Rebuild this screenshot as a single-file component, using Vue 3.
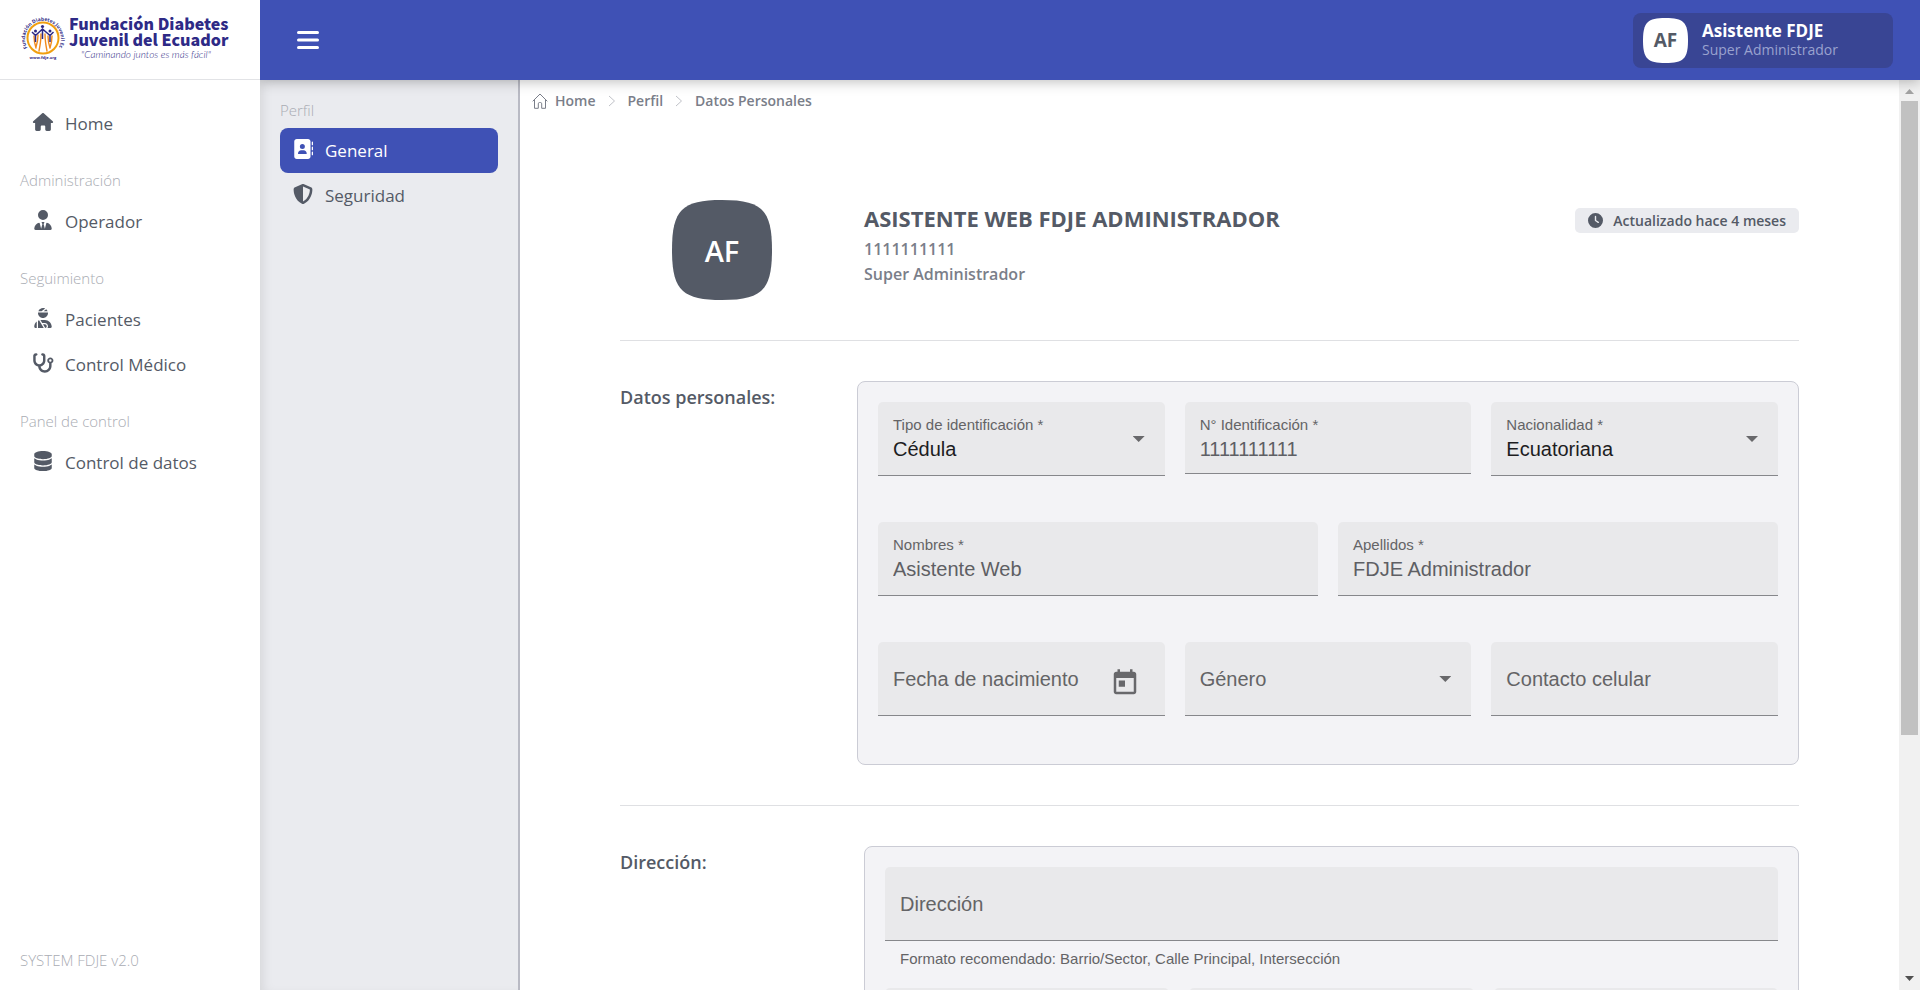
<script setup>
import { ref } from 'vue'

const icons = {
  house: { box: '0 0 576 512', d: 'M575.8 255.5c0 18-15 32.1-32 32.1h-32l.7 160.2c0 2.7-.2 5.4-.5 8.1V472c0 22.1-17.9 40-40 40H456c-1.1 0-2.2 0-3.3-.1c-1.4 .1-2.8 .1-4.2 .1H416 392c-22.1 0-40-17.9-40-40V448 384c0-17.7-14.3-32-32-32H256c-17.7 0-32 14.3-32 32v64 24c0 22.1-17.9 40-40 40H160 128.1c-1.5 0-3-.1-4.5-.2c-1.2 .1-2.4 .2-3.6 .2H104c-22.1 0-40-17.9-40-40V360c0-.9 0-1.9 .1-2.8V287.6H32c-18 0-32-14-32-32.1c0-9 3-17 10-24L266.4 8c7-7 15-8 22-8s15 2 21 7L564.8 231.5c8 7 12 15 11 24z' },
  operator: { box: '0 0 448 512', d: 'M96 128a128 128 0 1 0 256 0A128 128 0 1 0 96 128zm94.5 200.2l18.6 31L175.8 483.1l-36-146.9c-2-8.1-9.8-13.4-17.9-11.3C51.9 342.4 0 405.8 0 481.3c0 17 13.8 30.7 30.7 30.7H162.5c0 0 0 0 .1 0H168 280h5.5c0 0 0 0 .1 0H417.3c17 0 30.7-13.8 30.7-30.7c0-75.5-51.9-138.9-121.9-156.4c-8.1-2-15.9 3.3-17.9 11.3l-36 146.9L238.9 359.2l18.6-31c6.4-10.7-1.3-24.2-13.7-24.2H224 204.3c-12.4 0-20.1 13.6-13.7 24.2z' },
  patient: { box: '0 0 448 512', d: 'M240 80H342.7c-7.9-19.5-20.4-36.5-36.2-49.9L240 80zm37.7-68.2C261.3 4.2 243.2 0 224 0c-53.7 0-99.7 33.1-118.7 80h81.4l91-68.2zM224 256c70.7 0 128-57.3 128-128c0-5.4-.3-10.8-1-16H97c-.7 5.2-1 10.6-1 16c0 70.7 57.3 128 128 128zM124 312.4c-9.7 3.1-19.1 7-28 11.7V512H243.7L181.5 408.2 124 312.4zm33-7.2L204.3 384H272c44.2 0 80 35.8 80 80c0 18-6 34.6-16 48h82.3c16.4 0 29.7-13.3 29.7-29.7C448 383.8 368.2 304 269.7 304H178.3c-7.2 0-14.3 .4-21.3 1.3zM0 482.3C0 498.7 13.3 512 29.7 512H64V345.4C24.9 378.1 0 427.3 0 482.3zM320 464c0-26.5-21.5-48-48-48H223.5l57.1 95.2C303 507.2 320 487.6 320 464z' },
  stethoscope: { box: '0 0 576 512', d: 'M142.4 21.9c5.6 16.8-3.5 34.9-20.2 40.5L96 71.1V192c0 53 43 96 96 96s96-43 96-96V71.1l-26.1-8.7c-16.8-5.6-25.8-23.7-20.2-40.5s23.7-25.8 40.5-20.2l26.1 8.7C334.4 19.1 352 43.5 352 71.1V192c0 77.2-54.6 141.6-127.3 156.7C231 404.6 278.4 448 336 448c61.9 0 112-50.1 112-112V265.3c-28.3-12.3-48-40.5-48-73.3c0-44.2 35.8-80 80-80s80 35.8 80 80c0 32.8-19.7 61-48 73.3V336c0 97.2-78.8 176-176 176c-92.9 0-168.9-71.9-175.5-163.1C87.2 334.2 32 269.6 32 192V71.1c0-27.5 17.6-52 43.8-60.7l26.1-8.7c16.8-5.6 34.9 3.5 40.5 20.2zM480 224a32 32 0 1 0 0-64 32 32 0 1 0 0 64z' },
  database: { box: '0 0 448 512', d: 'M448 80v48c0 44.2-100.3 80-224 80S0 172.2 0 128V80C0 35.8 100.3 0 224 0S448 35.8 448 80zM393.2 214.7c20.8-7.4 39.9-16.9 54.8-28.6V288c0 44.2-100.3 80-224 80S0 332.2 0 288V186.1c14.9 11.8 34 21.2 54.8 28.6C99.7 230.7 159.5 240 224 240s124.3-9.3 169.2-25.3zM0 346.1c14.9 11.8 34 21.2 54.8 28.6C99.7 390.7 159.5 400 224 400s124.3-9.3 169.2-25.3c20.8-7.4 39.9-16.9 54.8-28.6V432c0 44.2-100.3 80-224 80S0 476.2 0 432V346.1z' },
  book: { box: '0 0 512 512', d: 'M96 0C60.7 0 32 28.7 32 64V448c0 35.3 28.7 64 64 64H384c35.3 0 64-28.7 64-64V64c0-35.3-28.7-64-64-64H96zM208 288h64c44.2 0 80 35.8 80 80c0 8.8-7.2 16-16 16H144c-8.8 0-16-7.2-16-16c0-44.2 35.8-80 80-80zm-32-96a64 64 0 1 1 128 0 64 64 0 1 1 -128 0zM512 80c0-8.8-7.2-16-16-16s-16 7.2-16 16v64c0 8.8 7.2 16 16 16s16-7.2 16-16V80zM496 192c-8.8 0-16 7.2-16 16v64c0 8.8 7.2 16 16 16s16-7.2 16-16V208c0-8.8-7.2-16-16-16zm16 144c0-8.8-7.2-16-16-16s-16 7.2-16 16v64c0 8.8 7.2 16 16 16s16-7.2 16-16V336z' },
  shield: { box: '0 0 512 512', d: 'M256 0c4.6 0 9.2 1 13.4 2.9L457.7 82.8c22 9.3 38.4 31 38.3 57.2c-.5 99.2-41.3 280.7-213.6 363.2c-16.7 8-36.1 8-52.8 0C57.3 420.7 16.5 239.2 16 140c-.1-26.2 16.3-47.9 38.3-57.2L242.7 2.9C246.8 1 251.4 0 256 0zm0 66.8V444.8C394 378 431.1 230.1 432 141.4L256 66.8l0 0z' },
}

const menu = [
  { items: [{ text: 'Home', icon: 'house' }] },
  { title: 'Administración', items: [{ text: 'Operador', icon: 'operator' }] },
  { title: 'Seguimiento', items: [{ text: 'Pacientes', icon: 'patient' }, { text: 'Control Médico', icon: 'stethoscope' }] },
  { title: 'Panel de control', items: [{ text: 'Control de datos', icon: 'database' }] },
]

const profileMenu = [
  { text: 'General', icon: 'book', active: true },
  { text: 'Seguridad', icon: 'shield', active: false },
]

const form = ref({
  tipo: 'Cédula',
  numero: '1111111111',
  nacionalidad: 'Ecuatoriana',
  nombres: 'Asistente Web',
  apellidos: 'FDJE Administrador',
  fecha: '',
  genero: '',
  celular: '',
  direccion: '',
})
</script>

<template>
  <div class="app">
    <aside class="sidebar">
      <a class="brand" href="#" aria-label="Fundación Diabetes Juvenil del Ecuador">
        <svg class="emblem" viewBox="0 0 46 46" aria-hidden="true">
          <defs><path id="ring-text" d="M7.5 33 A18 18 0 1 1 38.5 33" /></defs>
          <circle cx="23" cy="23" r="15.5" fill="#fff" stroke="#f0a010" stroke-width="2" />
          <text class="ring"><textPath href="#ring-text">Fundación Diabetes Juvenil Ecuador</textPath></text>
          <g fill="none" stroke="#f08a1d" stroke-width="1.4" stroke-linecap="round">
            <path d="M14 21c0 5 1 9 2 12M18 20c0 5-1 9-2 12M21 19c0 6-1 12-2 17M25 19c0 6 1 12 2 17M28 21c0 5 1 9 2 12M32 21c0 5-1 9-2 12" />
          </g>
          <g fill="#2e2a86">
            <circle cx="22.500" cy="11.500" r="1.600" /><circle cx="15.500" cy="16" r="1.500" /><circle cx="30" cy="16" r="1.500" />
          </g>
          <path d="M12 17l3.500 3.500L22.500 14l7.500 6.500L33.500 17M15.500 20v7M22.500 15v9M30 20v7" fill="none" stroke="#2e2a86" stroke-width="1.500" />
          <text class="site" x="23" y="44" text-anchor="middle">www.fdje.org</text>
        </svg>
        <span class="brand-text">
          <strong>Fundación Diabetes<br>Juvenil del Ecuador</strong>
          <em>"Caminando juntos es más fácil"</em>
        </span>
      </a>
      <nav class="menu">
        <div v-for="(group, i) in menu" :key="i">
          <p v-if="group.title" class="menu-title">{{ group.title }}</p>
          <a v-for="item in group.items" :key="item.text" class="item" href="#">
            <svg class="item-icon" :class="item.icon" :viewBox="icons[item.icon].box" aria-hidden="true"><path :d="icons[item.icon].d" /></svg>
            <span>{{ item.text }}</span>
          </a>
        </div>
      </nav>
      <p class="version">SYSTEM FDJE v2.0</p>
    </aside>

    <div class="shell">
      <header class="topbar">
        <button class="burger" type="button" aria-label="Menú">
          <svg viewBox="0 0 22 18" aria-hidden="true"><path d="M1.500 1.500h19M1.500 9h19M1.500 16.500h19" /></svg>
        </button>
        <button class="user" type="button">
          <span class="squircle small">
            <svg viewBox="0 0 100 100" aria-hidden="true"><path d="M0 50C0 10 10 0 50 0s50 10 50 50-10 50-50 50S0 90 0 50z" /></svg>
            <span>AF</span>
          </span>
          <span class="user-text">
            <strong>Asistente FDJE</strong>
            <span>Super Administrador</span>
          </span>
        </button>
      </header>

      <div class="body">
        <nav class="subnav">
          <p class="subnav-title">Perfil</p>
          <a v-for="item in profileMenu" :key="item.text" class="item" :class="{ active: item.active }" href="#">
            <svg class="item-icon" :viewBox="icons[item.icon].box" aria-hidden="true"><path :d="icons[item.icon].d" /></svg>
            <span>{{ item.text }}</span>
          </a>
        </nav>

        <main class="main">
          <nav class="crumbs" aria-label="Ruta">
            <a href="#">
              <svg class="crumb-home" viewBox="0 0 16 16" aria-hidden="true"><path d="M.7 8.300L8 1l7.300 7.300M2.500 7v8.300h3.800v-4.500c0-.8.400-1.300 1.200-1.300h1c.8 0 1.200.5 1.200 1.300v4.500h3.800V7" /></svg>
              Home
            </a>
            <svg class="crumb-sep" viewBox="0 0 8 12" aria-hidden="true"><path d="M1 1l5.500 5L1 11" /></svg>
            <a href="#">Perfil</a>
            <svg class="crumb-sep" viewBox="0 0 8 12" aria-hidden="true"><path d="M1 1l5.500 5L1 11" /></svg>
            <a href="#">Datos Personales</a>
          </nav>

          <div class="content">
            <section class="profile">
              <div class="squircle big">
                <svg viewBox="0 0 100 100" aria-hidden="true"><path d="M0 50C0 10 10 0 50 0s50 10 50 50-10 50-50 50S0 90 0 50z" /></svg>
                <span>AF</span>
              </div>
              <div class="who">
                <h1>ASISTENTE WEB FDJE ADMINISTRADOR</h1>
                <p>1111111111</p>
                <p>Super Administrador</p>
              </div>
              <span class="badge">
                <svg viewBox="0 0 512 512" aria-hidden="true"><path d="M256 0a256 256 0 1 1 0 512A256 256 0 1 1 256 0zM232 120V256c0 8 4 15.500 10.700 20l96 64c11 7.400 25.900 4.400 33.300-6.700s4.400-25.900-6.700-33.300L280 243.200V120c0-13.300-10.700-24-24-24s-24 10.700-24 24z" /></svg>
                Actualizado hace 4 meses
              </span>
            </section>

            <section class="block personal">
              <h2>Datos personales:</h2>
              <div class="card">
                <div class="row three">
                  <div class="field">
                    <label for="tipo">Tipo de identificación *</label>
                    <select id="tipo" v-model="form.tipo" class="dark"><option>Cédula</option><option>Pasaporte</option></select>
                    <i class="arrow"></i>
                  </div>
                  <div class="field short">
                    <label for="numero">N° Identificación *</label>
                    <input id="numero" v-model="form.numero" type="text">
                  </div>
                  <div class="field">
                    <label for="nacionalidad">Nacionalidad *</label>
                    <select id="nacionalidad" v-model="form.nacionalidad" class="dark"><option>Ecuatoriana</option><option>Extranjera</option></select>
                    <i class="arrow"></i>
                  </div>
                </div>
                <div class="row two">
                  <div class="field">
                    <label for="nombres">Nombres *</label>
                    <input id="nombres" v-model="form.nombres" type="text">
                  </div>
                  <div class="field">
                    <label for="apellidos">Apellidos *</label>
                    <input id="apellidos" v-model="form.apellidos" type="text">
                  </div>
                </div>
                <div class="row three">
                  <div class="field empty">
                    <label for="fecha">Fecha de nacimiento</label>
                    <input id="fecha" v-model="form.fecha" type="text">
                    <button class="calendar" type="button" aria-label="Abrir calendario">
                      <svg viewBox="0 0 24 24" aria-hidden="true"><path d="M19 3h-1V1h-2v2H8V1H6v2H5c-1.110 0-1.990.9-1.990 2L3 19c0 1.100.89 2 2 2h14c1.100 0 2-.9 2-2V5c0-1.100-.9-2-2-2zm0 16H5V8h14v11zM7 10h5v5H7z" /></svg>
                    </button>
                  </div>
                  <div class="field empty">
                    <label for="genero">Género</label>
                    <select id="genero" v-model="form.genero"><option value=""></option><option>Femenino</option><option>Masculino</option></select>
                    <i class="arrow"></i>
                  </div>
                  <div class="field empty">
                    <label for="celular">Contacto celular</label>
                    <input id="celular" v-model="form.celular" type="tel">
                  </div>
                </div>
              </div>
            </section>

            <section class="block address">
              <h2>Dirección:</h2>
              <div class="card">
                <div>
                  <div class="field empty">
                    <label for="direccion">Dirección</label>
                    <input id="direccion" v-model="form.direccion" type="text" aria-describedby="direccion-hint">
                  </div>
                  <p id="direccion-hint" class="hint">Formato recomendado: Barrio/Sector, Calle Principal, Intersección</p>
                </div>
                <div class="row three">
                  <div class="field"></div>
                  <div class="field"></div>
                  <div class="field"></div>
                </div>
              </div>
            </section>
          </div>
        </main>

        <div class="scrollbar" aria-hidden="true">
          <svg viewBox="0 0 21 21"><path d="M6 14h9L10.500 9z" fill="#a3a3a3" /></svg>
          <div class="track"><div class="thumb"></div></div>
          <svg viewBox="0 0 21 21"><path d="M6 7h9l-4.500 5z" fill="#505050" /></svg>
        </div>
      </div>
    </div>
  </div>
</template>

<style>
body {
  margin: 0;
}
</style>

<style scoped>
.app {
  display: flex;
  height: 100vh;
  overflow: hidden;
  background: #fff;
  color: #545a66;
  font-family: "Open Sans", "Noto Sans", sans-serif;
}
.app * {
  box-sizing: border-box;
}
p,
h1,
h2 {
  margin: 0;
}
a {
  color: inherit;
  text-decoration: none;
}
button {
  padding: 0;
  border: 0;
  background: none;
  color: inherit;
  font: inherit;
  text-align: left;
  cursor: pointer;
}

/* Sidebar */
.sidebar {
  z-index: 2;
  display: flex;
  flex: 0 0 260px;
  flex-direction: column;
  min-width: 0;
  background: #fff;
}
.brand {
  display: flex;
  flex: 0 0 80px;
  gap: 3px;
  padding: 15px 20px 0;
  border-bottom: 1px solid #e2e3e6;
}
.emblem {
  flex: none;
  width: 46px;
  height: 46px;
  overflow: visible;
}
.ring {
  fill: #2e2a86;
  font-size: 5px;
  font-weight: 700;
}
.site {
  fill: #2e2a86;
  font-size: 4px;
  font-weight: 700;
}
.brand-text {
  display: flex;
  flex-direction: column;
  color: #2e2a86;
  white-space: nowrap;
}
.brand-text strong {
  font-family: "Noto Sans CJK SC", "Noto Sans", sans-serif;
  font-size: 16px;
  font-weight: 900;
  line-height: 16px;
}
.brand-text em {
  padding-left: 12px;
  font-family: Lato, sans-serif;
  font-size: 10px;
  font-weight: 300;
  line-height: 14px;
}
.menu {
  flex: 1;
  padding: 21px 20px 0;
}
.menu-title,
.subnav-title,
.version {
  color: #a9acb3;
  font-size: 15px;
  font-weight: 300;
  line-height: 20px;
}
.menu-title {
  padding: 24px 0 9px;
}
.version {
  padding: 0 20px 20px;
}
.item {
  display: flex;
  align-items: center;
  height: 45px;
  padding: 0 12px;
  gap: 11px;
  border-radius: 8px;
  font-size: 17px;
  font-weight: 400;
  line-height: 24px;
}
.item-icon {
  width: 22px;
  height: 20px;
  margin-bottom: 4px;
  fill: #545a66;
}
.item-icon.house {
  height: 18px;
}

/* Top bar */
.shell {
  display: flex;
  flex: 1;
  flex-direction: column;
  min-width: 0;
}
.topbar {
  z-index: 1;
  display: flex;
  flex: 0 0 80px;
  align-items: center;
  justify-content: space-between;
  padding: 0 27px 0 37px;
  background: #3f51b5;
  box-shadow: 0 2px 12px rgba(0, 0, 0, 0.25);
}
.burger svg {
  display: block;
  width: 22px;
  height: 18px;
  stroke: #fff;
  stroke-width: 3;
  stroke-linecap: round;
}
.user {
  display: flex;
  align-items: center;
  gap: 14px;
  width: 260px;
  height: 55px;
  padding: 0 10px;
  border-radius: 8px;
  background: #394594;
}
.squircle {
  display: grid;
  place-items: center;
}
.squircle > * {
  grid-area: 1 / 1;
}
.squircle svg {
  display: block;
  width: 100%;
  height: 100%;
}
.small {
  width: 45px;
  height: 45px;
  font-size: 19px;
  font-weight: 700;
}
.small svg {
  fill: #fff;
}
.small span {
  color: #545a66;
}
.user-text {
  display: flex;
  flex-direction: column;
  color: #9aa2cf;
  font-size: 14px;
  line-height: 18px;
}
.user-text strong {
  color: #fff;
  font-size: 17px;
  line-height: 20px;
}

/* Profile menu */
.body {
  display: flex;
  flex: 1;
  min-height: 0;
}
.subnav {
  flex: 0 0 260px;
  padding: 20px 20px 0;
  border-right: 2px solid #b9bac4;
  background: #eaebef;
  box-shadow: inset 8px 0 12px -6px rgba(0, 0, 0, 0.1);
}
.subnav-title {
  padding-bottom: 8px;
}
.active {
  background: #3f51b5;
  color: #fff;
}
.active .item-icon {
  fill: #fff;
}

/* Main */
.main {
  flex: 1;
  min-width: 0;
  overflow-y: auto;
  scrollbar-width: none;
}
.crumbs {
  display: flex;
  align-items: center;
  gap: 12px;
  padding: 11px 12px 0;
  color: #7a7e89;
  font-size: 14px;
  font-weight: 600;
  line-height: 20px;
}
.crumbs a {
  display: flex;
  align-items: center;
  gap: 7px;
}
.crumb-home {
  width: 16px;
  height: 16px;
  fill: none;
  stroke: #7a7e89;
}
.crumb-sep {
  width: 8px;
  height: 12px;
  fill: none;
  stroke: #c0c2c8;
}
.content {
  padding: 89px 100px 40px;
}
.profile {
  display: grid;
  grid-template-columns: 204px 1fr auto;
  column-gap: 40px;
  align-items: start;
  padding-bottom: 40px;
}
.big {
  justify-self: center;
  width: 100px;
  height: 100px;
  font-size: 29px;
  font-weight: 600;
}
.big svg {
  fill: #545a66;
}
.big span {
  color: #fff;
}
.who {
  color: #7a7e89;
  font-size: 16px;
  font-weight: 600;
  line-height: 25px;
}
h1 {
  padding-bottom: 1px;
  color: #545a66;
  font-size: 22px;
  font-weight: 700;
  line-height: 36px;
}
.badge {
  display: flex;
  align-items: center;
  gap: 10px;
  height: 25px;
  margin-top: 8px;
  padding: 0 13px;
  border-radius: 5px;
  background: #eaebef;
  font-size: 14px;
  font-weight: 600;
}
.badge svg {
  width: 15px;
  height: 15px;
  fill: #545a66;
}
.block {
  display: grid;
  grid-template-columns: 204px 1fr;
  column-gap: 40px;
  padding: 40px 0;
  border-top: 1px solid #dfe0e3;
}
.personal {
  column-gap: 33px;
}
h2 {
  padding-top: 4px;
  font-size: 18px;
  font-weight: 600;
  line-height: 25px;
}
.card {
  display: flex;
  flex-direction: column;
  gap: 46px;
  padding: 20px 20px 48px;
  border: 1px solid #cbccd5;
  border-radius: 8px;
  background: #f3f3f6;
}
.address .card {
  gap: 0;
}
.row {
  display: grid;
  column-gap: 20px;
  align-items: start;
}
.three {
  grid-template-columns: repeat(3, 1fr);
}
.two {
  grid-template-columns: repeat(2, 1fr);
}

/* Fields */
.field {
  display: grid;
  grid-template-rows: 18px 24px;
  row-gap: 3px;
  height: 74px;
  padding: 14px 15px 0;
  border-bottom: 1px solid #86878b;
  border-radius: 5px 5px 0 0;
  background: #e9e9eb;
  position: relative;
  color: #646466;
  font-family: "Liberation Sans", Arial, sans-serif;
}
.field.short {
  height: 72px;
}
.field label {
  font-size: 15px;
  line-height: 18px;
}
.field input,
.field select {
  width: 100%;
  height: 24px;
  padding: 0;
  border: 0;
  outline: 0;
  background: none;
  color: #5e5f64;
  font: 20px/24px "Liberation Sans", Arial, sans-serif;
  appearance: none;
}
.field select.dark {
  color: #1d1d1f;
}
.field.empty {
  grid-template-rows: 1fr;
  align-items: center;
  padding-top: 1px;
}
.field.empty > label,
.field.empty > input,
.field.empty > select {
  grid-area: 1 / 1;
}
.field.empty > label {
  font-size: 20px;
  line-height: 24px;
}
.arrow {
  position: absolute;
  top: 34px;
  right: 20px;
  width: 12px;
  height: 6px;
  background: #68686b;
  clip-path: polygon(0 0, 100% 0, 50% 100%);
  pointer-events: none;
}
.calendar {
  position: absolute;
  top: 26px;
  right: 25px;
  width: 30px;
  height: 30px;
}
.calendar svg {
  display: block;
  fill: #68686b;
}
.hint {
  height: 47px;
  padding: 9px 15px 0;
  color: #646466;
  font: 15px/18px "Liberation Sans", Arial, sans-serif;
}

/* Scroll bar */
.scrollbar {
  display: flex;
  flex: 0 0 21px;
  flex-direction: column;
  background: #f1f1f1;
}
.scrollbar svg {
  flex: 0 0 21px;
}
.track {
  flex: 1;
  padding: 0 2px;
}
.thumb {
  height: 73%;
  background: #c1c1c1;
}
</style>
